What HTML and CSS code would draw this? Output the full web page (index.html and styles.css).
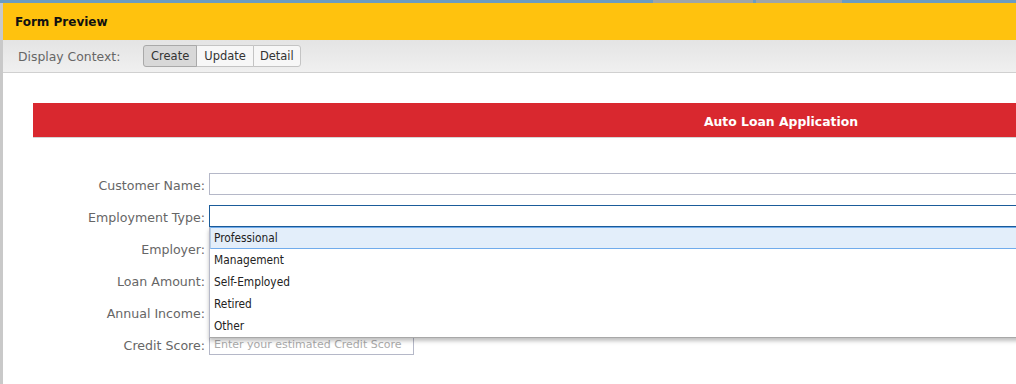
FILE: index.html
```html
<!DOCTYPE html>
<html lang="en">
  <head>
    <meta charset="UTF-8" />
    <meta name="viewport" content="width=device-width, initial-scale=1.0" />
    <title>Form Preview</title>
    <link rel="stylesheet" href="styles.css">
  </head>

  <body>
    <div class="backdrop">
      <span class="back-tab tab-one"></span>
      <span class="back-tab tab-two"></span>
    </div>
    <div class="window">
      <div class="window-title">Form Preview</div>
      <div class="toolbar">
        <span class="toolbar-label">Display Context:</span>
        <div class="btn-group">
          <button class="btn active">Create</button>
          <button class="btn">Update</button>
          <button class="btn">Detail</button>
        </div>
      </div>

      <div class="content">
        <div class="form">
          <div class="form-title">Auto Loan Application</div>

          <div class="fields">
            <div class="row">
              <label>Customer Name:</label>
              <input class="field wide" type="text" />
            </div>
            <div class="row">
              <label>Employment Type:</label>
              <div class="select-wrap">
                <input class="field wide focused" type="text" />
                <ul class="dropdown">
                  <li class="hover">Professional</li>
                  <li>Management</li>
                  <li>Self-Employed</li>
                  <li>Retired</li>
                  <li>Other</li>
                </ul>
              </div>
            </div>
            <div class="row">
              <label>Employer:</label>
              <input class="field wide" type="text" />
            </div>
            <div class="row">
              <label>Loan Amount:</label>
              <input class="field wide" type="text" />
            </div>
            <div class="row">
              <label>Annual Income:</label>
              <input class="field wide" type="text" />
            </div>
            <div class="row">
              <label>Credit Score:</label>
              <input class="field short" type="text" placeholder="Enter your estimated Credit Score" />
            </div>
          </div>
        </div>
      </div>
    </div>
  </body>
</html>
```

FILE: styles.css
```css
body {
  margin: 0;
  width: 1016px;
  height: 384px;
  overflow: hidden;
  background-color: #c9c9c9;
  font-family: "DejaVu Sans", Verdana, sans-serif;
}

.backdrop {
  display: flex;
  height: 3px;
  background-color: #6b9cc2;
}

.back-tab {
  height: 3px;
  background-color: #9ea5a8;
}

.tab-one {
  width: 100px;
  margin-left: 653px;
}

.tab-two {
  width: 86px;
  margin-left: 3px;
}

.window {
  margin-left: 3px;
  background-color: white;
  height: 381px;
  overflow: hidden;
}

.window-title {
  height: 37px;
  line-height: 39px;
  padding-left: 12px;
  background-color: #ffc20e;
  color: #111;
  font-size: 12px;
  font-weight: bold;
}

.toolbar {
  display: flex;
  align-items: center;
  height: 32px;
  padding-left: 15px;
  background: linear-gradient(#e4e4e4, #f0f0f0);
  border-bottom: 1px solid #d0d0d0;
}

.toolbar-label {
  width: 125px;
  padding-top: 1px;
  color: #666;
  font-size: 12.4px;
}

.btn-group {
  display: flex;
}

.btn {
  height: 22px;
  padding: 0 7px;
  margin-left: -1px;
  background-color: #f7f7f7;
  border: 1px solid #c4c4c4;
  color: #333;
  font-family: "DejaVu Sans", Verdana, sans-serif;
  font-size: 11.5px;
}

.btn:first-child {
  margin-left: 0;
  border-radius: 3px 0 0 3px;
}

.btn:last-child {
  padding: 0 6px;
  border-radius: 0 3px 3px 0;
}

.btn.active {
  background-color: #d8d8d8;
  border-color: #a9a9a9;
  position: relative;
}

.content {
  padding: 30px 0 0 30px;
}

.form {
  width: 1496px;
}

.form-title {
  height: 34px;
  line-height: 37px;
  background-color: #d9282f;
  border-bottom: 1px solid #d4d4d4;
  color: white;
  text-align: center;
  font-size: 12.4px;
  font-weight: bold;
}

.fields {
  padding-top: 35px;
}

.row {
  display: flex;
  align-items: center;
  height: 22px;
  margin-bottom: 10px;
}

.row label {
  width: 172px;
  padding-top: 3px;
  padding-right: 4px;
  text-align: right;
  color: #666;
  font-size: 12.6px;
}

.field {
  box-sizing: border-box;
  height: 22px;
  margin: 0;
  padding: 0 4px;
  border: 1px solid #b5b8c8;
  background-color: white;
  font-family: "DejaVu Sans", Verdana, sans-serif;
  font-size: 11px;
  outline: none;
}

.wide {
  width: 1200px;
}

.short {
  width: 205px;
  height: 21px;
}

.short::placeholder {
  color: #ababab;
}

.focused {
  border-color: #1b5c9a;
}

.select-wrap {
  position: relative;
}

.dropdown {
  position: absolute;
  top: 22px;
  left: 0;
  z-index: 2;
  width: 1200px;
  margin: 0;
  padding: 0;
  list-style: none;
  background-color: white;
  border-left: 1px solid #b5b8c8;
  border-bottom: 1px solid #a8a8a8;
  box-shadow: 0 3px 4px rgba(0, 0, 0, 0.25);
}

.dropdown li {
  box-sizing: border-box;
  height: 22px;
  line-height: 22px;
  padding-left: 4px;
  color: #222;
  font-family: "DejaVu Sans Condensed", "DejaVu Sans", sans-serif;
  font-size: 11.8px;
}

.dropdown li.hover {
  line-height: 20px;
  padding-left: 3px;
  background-color: #e3eefa;
  border: 1px solid #71acec;
  border-left-color: #b5cfe9;
}
```
